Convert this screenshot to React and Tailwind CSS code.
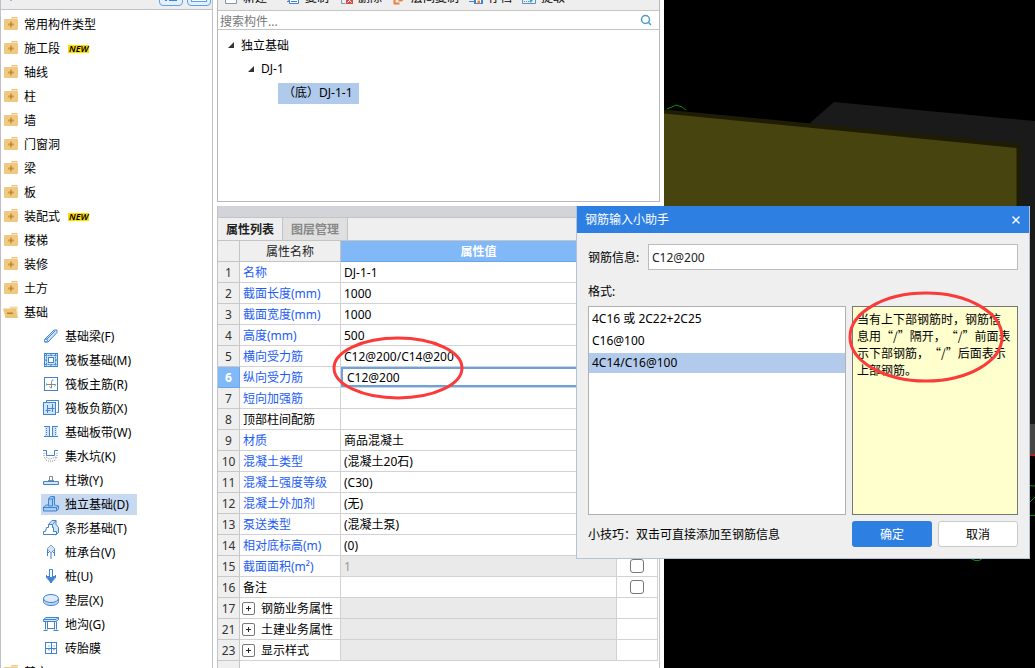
import React from "react";
import { Search, X } from "lucide-react";

const BLUE = "#3f83d3";
const PALE = "#d3e5fa";

function Folder({ open }) {
  if (open) {
    return (
      <svg width="16" height="14" viewBox="0 0 16 14" aria-hidden="true">
        <path d="M7 1.500h7.500V12h-2L7 4z" fill="#f6dca4" />
        <path d="M0 3.500h12.500L15 13H2.500z" fill="#eec578" />
        <path d="M4 7.500h6v1.500H4z" fill="#b98328" />
      </svg>
    );
  }
  return (
    <svg width="16" height="14" viewBox="0 0 16 14" aria-hidden="true">
      <path d="M8 1.500 8.700 0h5.500l.8 1.500z" fill="#eec578" />
      <rect x="1" y="2" width="14" height="11" rx="1" fill="#efc981" />
      <path d="M5 6.500h2v-2h2v2h2v2H9v2H7v-2H5z" fill="#d0a04a" />
      <path d="M7 6.500h2v2H7z" fill="#b98328" />
    </svg>
  );
}

const drawings = {
  beam: (
    <>
      <path d="M1.500 11.500 11 2h3v2.500L5 14H1.500z" fill={PALE} />
      <path d="M3 12 12 3" />
      <circle cx="3" cy="12.500" r="1.500" fill="#fff" />
    </>
  ),
  raft: (
    <>
      <rect x="1.500" y="1.500" width="13" height="13" fill={PALE} />
      <rect x="5.500" y="5.500" width="5" height="5" fill="#fff" />
      <path d="M3.500 1.500v13M12.500 1.500v13M1.500 3.500h13M1.500 12.500h13" strokeDasharray="2 1" />
      <path d="M8 2v2M8 12v2M2 8h2M12 8h2" />
    </>
  ),
  mainBar: (
    <>
      <rect x="1.500" y="1.500" width="13" height="13" fill="#fff" />
      <path d="M8.500 12V5.500Q8.500 4 10.500 4M8.500 12Q7 12 6.500 10.500M3.500 9.500V8.500H12.500Q12.500 10 11.500 10.500M3.500 8.500V7.500" stroke="#888" />
    </>
  ),
  negBar: (
    <>
      <path d="M3.500 2.500V.500h12v12h-2" />
      <rect x=".5" y="2.500" width="12" height="12" fill={PALE} />
      <path d="M4.500 5v8M9.500 4v8M4.500 8.500h7M2.500 10.500h5" />
    </>
  ),
  strip: (
    <>
      <path d="M2 2h4v11H2zM10 2h4v11h-4z" fill={PALE} stroke="none" />
      <path d="M1 2.500h5.500M9 2.500h6M1 12.500h14M6.500 2v10.500M9.500 2v10.500" />
      <path d="M3.500 4v8M12.500 4v8" strokeDasharray="1 1" />
    </>
  ),
  pit: (
    <>
      <path d="M0 2.500h3.500v5h8v-5H15" />
      <path d="M1 5v4l3 4h7l3-4V5M3 9l3 2 4-1 3-1" stroke="#8a9098" strokeDasharray="1 1" />
    </>
  ),
  pier: (
    <>
      <path d="M6.500 8.500v-4h3v4" stroke="#888" />
      <path d="M5 8.500h6" stroke="#888" />
      <path d="M.5 9.500h15v3H.5z" fill={PALE} />
    </>
  ),
  isolated: (
    <>
      <path d="M5.500 9V3l2-2.500h4V9l4 1v3l-2 2H.5v-4l3-2z" fill="#a9cdf5" />
      <path d="M5.500 3h4v7h-4zM9.500 3l2-2M.5 11.500h13M13.500 15v-3.500l2-1.500" />
    </>
  ),
  stripBase: (
    <>
      <path d="M5.500 4.500 9 .500h4v4l2.500 3v5l-3 2.500z" fill={PALE} />
      <path d="M.5 14.500v-3h2l1-4h2v-3h4v3h1v4h3v3z" fill="#fff" />
      <path d="M9.500 4.500 13 .5" />
    </>
  ),
  pileCap: (
    <>
      <path d="m8 1 4 4-4 4-4-4z" fill={PALE} stroke="#8a9fb8" />
      <path d="M8 9v6M4.500 6v6M11.500 6v6M7 7 5 9M9 7l2 2" />
    </>
  ),
  pile: (
    <>
      <path d="M3 8.500h10M3.500 7v3l4.500 4 4.500-4V7" />
      <path d="M4.500 9.500h7L8 15z" fill={BLUE} />
      <path d="M6.500 1.500h3v8h-3z" fill="#fff" />
    </>
  ),
  cushion: (
    <>
      <path d="M.5 6.500v3c0 2 3 4 7.500 4s7.500-2 7.500-4v-3" fill="#b9d4f4" />
      <ellipse cx="8" cy="6.500" rx="7.500" ry="4" fill="#dfeafa" />
    </>
  ),
  trench: (
    <>
      <path d="M.5 3.500 3 1.500h12.500v2L13 5.500H.5z" fill={PALE} />
      <path d="M.5 3.500H13l2-2M2.500 5.500v8M4.500 5.500v8M11.500 5.500v8M13.500 5.500v8M.5 14.500h4M10.500 14.500h5M5 12.500h6" />
    </>
  ),
  brick: (
    <>
      <rect x="2.500" y="2.500" width="11" height="11" fill="#fff" />
      <path d="M2.500 8.500h11M8.500 2.500v11M6 5.500v1M11 5.500v1M6 8.500v2M11 8.500v2" />
    </>
  ),
};

function Glyph({ name }) {
  return (
    <svg width="16" height="16" viewBox="0 0 16 16" fill="none" stroke={BLUE} strokeWidth="1" aria-hidden="true">
      {drawings[name]}
    </svg>
  );
}

const categories = [
  ["常用构件类型"],
  ["施工段", true],
  ["轴线"],
  ["柱"],
  ["墙"],
  ["门窗洞"],
  ["梁"],
  ["板"],
  ["装配式", true],
  ["楼梯"],
  ["装修"],
  ["土方"],
];

const foundations = [
  ["beam", "基础梁(F)"],
  ["raft", "筏板基础(M)"],
  ["mainBar", "筏板主筋(R)"],
  ["negBar", "筏板负筋(X)"],
  ["strip", "基础板带(W)"],
  ["pit", "集水坑(K)"],
  ["pier", "柱墩(Y)"],
  ["isolated", "独立基础(D)", true],
  ["stripBase", "条形基础(T)"],
  ["pileCap", "桩承台(V)"],
  ["pile", "桩(U)"],
  ["cushion", "垫层(X)"],
  ["trench", "地沟(G)"],
  ["brick", "砖胎膜"],
];

function Category({ label, isNew, open }) {
  return (
    <button type="button" className="flex h-6 w-full shrink-0 items-center pl-[2px] text-left">
      <Folder open={open} />
      <span className="ml-[5px] pt-0.5">{label}</span>
      {isNew && (
        <span className="ml-2 mt-0.5 bg-[#ffdc00] px-px text-[9px] leading-[8px] font-semibold italic">NEW</span>
      )}
    </button>
  );
}

function Sidebar() {
  return (
    <aside className="flex w-[213px] shrink-0 flex-col overflow-hidden border-x border-[#c0c0c8] bg-white">
      <div className="flex h-[10px] shrink-0 items-end gap-1 overflow-hidden border-b border-[#c0c0c8] bg-[#eeeeee] pr-px pb-[3px]">
        <svg className="mr-auto ml-2 mb-[5px]" width="4" height="4" viewBox="0 0 4 4" aria-hidden="true">
          <path d="M0 0h4v2L2 4 0 2z" fill={BLUE} />
        </svg>
        <button type="button" aria-label="列表视图" className="flex h-5 w-6 items-center justify-center rounded border border-[#5aa2ee] bg-[#e4f0fd]">
          <svg width="14" height="14" viewBox="0 0 14 14" fill="none" stroke={BLUE} aria-hidden="true">
            <path d="M1 2.500h2M5 2.500h8M1 6.500h2M5 6.500h8M1 11.500h2M5 11.500h8" />
          </svg>
        </button>
        <button type="button" aria-label="图标视图" className="flex h-5 w-6 items-center justify-center rounded border border-[#5aa2ee] bg-[#e4f0fd]">
          <svg width="16" height="14" viewBox="0 0 16 14" fill="#fff" stroke="#5aa2ee" aria-hidden="true">
            <rect x=".5" y=".5" width="15" height="12" />
          </svg>
        </button>
      </div>
      <nav className="flex flex-col pt-[2px]">
        {categories.map(([label, isNew]) => (
          <Category key={label} label={label} isNew={isNew} />
        ))}
        <Category label="基础" open />
        {foundations.map(([icon, label, active]) => (
          <div key={label} className="flex h-6 shrink-0 items-center pl-10">
            <button
              type="button"
              className={`flex h-[21px] items-center gap-[6px] pr-2 pl-[2px] ${active ? "bg-[#c7d9f0]" : ""}`}
            >
              <Glyph name={icon} />
              <span className="pt-0.5">{label}</span>
            </button>
          </div>
        ))}
        <Category label="其它" />
      </nav>
    </aside>
  );
}

const tools = [
  ["新建", "mr-[19px]", <path key="p" d="M1.500 1.500h11v11h-11z" stroke="#8a94a8" fill="#fff" />],
  [
    "复制",
    "mr-[10px]",
    <g key="p" stroke={BLUE}>
      <path d="M1 10.500h2v-8" />
      <path d="M3.500.500h9v12h-9zM5 8.500h6M5 10.500h6" fill="#fff" />
    </g>,
  ],
  [
    "删除",
    "mr-[10px]",
    <g key="p">
      <path d="M.5 8.500h2v4h4" stroke="#8a94a8" />
      <path d="M7 6h7v7H7z" fill="#d94a4a" />
      <path d="m8.500 7.500 4 4M12.500 7.500l-4 4" stroke="#fff" />
    </g>,
  ],
  [
    "层间复制",
    "mr-[10px]",
    <path key="p" d="M2.500 2.500v10h5M6.500 2.500h5v5l-2 2h-3" stroke="#e8823a" strokeWidth="2" />,
  ],
  [
    "存档",
    "mr-[10px]",
    <g key="p">
      <path d="M0 10.500h5" stroke={BLUE} />
      <path d="M5 3h9v10H5z" fill={BLUE} />
      <path d="M7 8h5v4H7z" fill="#fff" />
      <path d="M8.500 9.500h2.500v3H8.500z" fill="#e8823a" />
    </g>,
  ],
  [
    "提取",
    "",
    <g key="p">
      <path d="M.5 4v8.500h13V9" stroke="#5f8fc8" />
      <path d="M2 10.500h5" stroke="#5f8fc8" strokeDasharray="1 1" />
      <path d="m8 11 5-6" stroke="#28a5c0" strokeWidth="2" />
    </g>,
  ],
];

function Toolbar() {
  return (
    <div className="flex h-[10px] shrink-0 items-end overflow-hidden bg-[#eeeeee] pb-1 pl-[6px]">
      {tools.map(([label, gap, drawing]) => (
        <button key={label} type="button" className={`flex shrink-0 items-center gap-[5px] leading-4 ${gap}`}>
          <svg width="14" height="14" viewBox="0 0 14 14" fill="none" aria-hidden="true">
            {drawing}
          </svg>
          <span>{label}</span>
        </button>
      ))}
    </div>
  );
}

function Caret() {
  return (
    <svg width="6" height="6" viewBox="0 0 6 6" aria-hidden="true">
      <path d="M6 0v6H0z" fill="#333" />
    </svg>
  );
}

function ComponentTree() {
  return (
    <div className="flex h-[202px] shrink-0 flex-col border border-t-0 border-[#b8b8b8] bg-white">
      <Toolbar />
      <div className="flex h-5 shrink-0 items-center border-y border-[#c4c4c4] pr-[7px]">
        <input aria-label="搜索构件" placeholder="搜索构件..." className="h-[18px] min-w-0 flex-1 px-[2px] pt-0.5 outline-none placeholder:text-[#777]" />
        <Search size={12} strokeWidth={3} color="#4a9cc8" />
      </div>
      <ul className="pt-[3px]">
        <li className="flex h-6 items-center gap-[7px] pl-[10px]">
          <Caret />
          <span className="pt-0.5">独立基础</span>
        </li>
        <li className="flex h-6 items-center gap-[7px] pl-[30px]">
          <Caret />
          <span>DJ-1</span>
        </li>
        <li className="flex h-6 items-center pl-[60px]">
          <button type="button" className="h-[21px] bg-[#b0caeb] pr-[6px] pl-[5px]">（底）DJ-1-1</button>
        </li>
      </ul>
    </div>
  );
}

const rows = [
  { n: 1, name: "名称", value: "DJ-1-1" },
  { n: 2, name: "截面长度(mm)", value: "1000" },
  { n: 3, name: "截面宽度(mm)", value: "1000" },
  { n: 4, name: "高度(mm)", value: "500" },
  { n: 5, name: "横向受力筋", value: "C12@200/C14@200" },
  { n: 6, name: "纵向受力筋", value: "C12@200", editing: true },
  { n: 7, name: "短向加强筋", value: "" },
  { n: 8, name: "顶部柱间配筋", value: "", plain: true },
  { n: 9, name: "材质", value: "商品混凝土" },
  { n: 10, name: "混凝土类型", value: "(混凝土20石)" },
  { n: 11, name: "混凝土强度等级", value: "(C30)" },
  { n: 12, name: "混凝土外加剂", value: "(无)" },
  { n: 13, name: "泵送类型", value: "(混凝土泵)" },
  { n: 14, name: "相对底标高(m)", value: "(0)" },
  { n: 15, name: "截面面积(m²)", value: "1", locked: true, check: true },
  { n: 16, name: "备注", value: "", plain: true, check: true },
  { n: 17, name: "钢筋业务属性", group: true },
  { n: 21, name: "土建业务属性", group: true },
  { n: 23, name: "显示样式", group: true },
];

function PropertyRow({ row }) {
  const cell = "h-[21px] border-r border-b border-[#d2d2d2] p-0 leading-4 whitespace-nowrap";
  return (
    <tr>
      <th
        scope="row"
        className={`h-[21px] border-r border-b px-0 pt-0.5 pb-0 text-center leading-4 ${
          row.editing ? "border-[#6aa6ea] bg-[#80b8f8] font-bold text-white" : "border-[#c8c8c8] bg-[#efefef] font-normal text-[#333]"
        }`}
      >
        {row.n}
      </th>
      <td className={`${cell} ${row.plain || row.group ? "text-black" : "text-[#1c5cf5]"}`}>
        {row.group ? (
          <span className="flex items-center gap-[6px] pl-[2px]">
            <button type="button" aria-label={`展开${row.name}`} className="flex h-[13px] w-[13px] items-center justify-center rounded-[2px] border border-[#777]">
              <svg width="7" height="7" viewBox="0 0 7 7" stroke="#222" aria-hidden="true">
                <path d="M1 3.500h5M3.500 1v5" />
              </svg>
            </button>
            <span className="pt-0.5">{row.name}</span>
          </span>
        ) : (
          <span className="block pt-0.5 pl-[3px]">{row.name}</span>
        )}
      </td>
      <td className={`${cell} ${row.locked || row.group ? "bg-[#eaeaea] text-[#999]" : ""}`}>
        {row.editing ? (
          <input
            aria-label={row.name}
            defaultValue={row.value}
            className="block h-5 w-full border-2 border-r-0 border-[#6aa2e4] bg-white pl-1 outline-none"
          />
        ) : (
          <span className="block pt-0.5 pl-[3px]">{row.value}</span>
        )}
      </td>
      <td className={cell}>
        {row.check && (
          <input
            type="checkbox"
            aria-label={`${row.name}附加`}
            className="mx-auto block h-[14px] w-[14px] appearance-none rounded-[3px] border border-[#777] bg-white"
          />
        )}
      </td>
    </tr>
  );
}

function PropertyPanel() {
  return (
    <div className="mt-1 flex min-h-0 flex-1 flex-col overflow-hidden border-x border-[#c4c4c4] bg-white">
      <div className="h-3 shrink-0 border-b border-[#c4c4c8] bg-[#d3d3da]" />
      <div className="flex h-[23px] shrink-0 border-b border-[#c4c4c4] bg-[#efefef]">
        <button type="button" className="w-[65px] border-r border-[#c4c4c4] pt-0.5 font-bold text-[#222]">属性列表</button>
        <button type="button" className="w-[65px] border-r border-[#c4c4c4] bg-[#e0e0e0] pt-0.5 font-bold text-[#888]">图层管理</button>
      </div>
      <div className="flex-1 pr-px">
        <table className="w-full table-fixed border-separate border-spacing-0">
          <colgroup>
            <col className="w-[22px]" />
            <col className="w-[101px]" />
            <col />
            <col className="w-[41px]" />
          </colgroup>
          <thead>
            <tr className="leading-4">
              <td className="h-[21px] border-r border-b border-[#c4c4c4] bg-[#efefef] p-0" />
              <th scope="col" className="border-r border-b border-[#c4c4c4] bg-[#efefef] px-0 pt-0.5 pb-0 font-normal text-[#222]">属性名称</th>
              <th scope="col" className="border-r border-b border-[#6aa6ea] bg-[#80b8f8] px-0 pt-0.5 pb-0 font-bold text-white">属性值</th>
              <td className="border-r border-b border-[#c4c4c4] bg-[#efefef] p-0" />
            </tr>
          </thead>
          <tbody>
            {rows.map((row) => (
              <PropertyRow key={row.n} row={row} />
            ))}
          </tbody>
        </table>
        <div className="h-full w-[22px] border-r border-[#c4c4c4] bg-[#efefef]" />
      </div>
    </div>
  );
}

function Viewport() {
  return (
    <main className="min-w-0 flex-1 overflow-hidden bg-black">
      <svg width="371" height="668" viewBox="664 0 371 668" fill="none" aria-hidden="true">
        <path d="M810 123 834 102 1035 121V424H900z" fill="#1a1a1a" />
        <path d="M1020 424h15v31h-15z" fill="#454545" />
        <path d="M664 109.500 1021 143.500V300H664z" fill="#1e1c04" />
        <path d="M664 113.500 1016.500 148V300H664z" fill="#47440f" />
        <path d="m667 109 5-2 4-2 6 2 4 3" stroke="#079007" />
        <path d="m1020 454 15 1.500" stroke="#e01818" strokeWidth="1.500" />
        <path d="m1020 485 15 1M1028 504l7-7M1020 515.500h15M968 557l7 3.500h4l7-4" stroke="#079007" />
      </svg>
    </main>
  );
}

const formats = ["4C16 或 2C22+2C25", "C16@100", "4C14/C16@100"];

function RebarDialog() {
  return (
    <section
      role="dialog"
      aria-labelledby="rebar-title"
      className="absolute top-[206px] left-[576px] flex w-[454px] flex-col border border-t-0 border-[#b4c2d8] bg-[#efefef]"
    >
      <header className="flex h-[27px] items-center justify-between bg-[#2d80e2] pr-[7px] pl-2 text-white">
        <h2 id="rebar-title">钢筋输入小助手</h2>
        <button type="button" aria-label="关闭">
          <X size={12} strokeWidth={3} />
        </button>
      </header>
      <div className="flex flex-col px-[11px] pt-[11px] pb-[11px]">
        <div className="flex items-center">
          <label htmlFor="rebar-info" className="w-[60px] shrink-0 pt-0.5">钢筋信息:</label>
          <input
            id="rebar-info"
            defaultValue="C12@200"
            className="h-[26px] min-w-0 flex-1 border border-[#bcbcbc] bg-white px-[3px] text-[#222] outline-none"
          />
        </div>
        <p className="mt-[14px] mb-[6px] leading-4">格式:</p>
        <div className="flex h-[209px] gap-[6px]">
          <ul className="w-[258px] shrink-0 border border-[#b0b0b0] bg-white pt-px">
            {formats.map((text, i) => (
              <li key={text}>
                <button type="button" className="block h-[22px] w-full text-left">
                  <span className={`block h-5 px-[3px] leading-5 ${i === 2 ? "bg-[#b2cbec]" : ""}`}>{text}</span>
                </button>
              </li>
            ))}
          </ul>
          <p className="min-w-0 flex-1 border border-[#777] bg-[#ffffce] py-[3px] pl-1 font-['Noto_Sans_CJK_SC',sans-serif] leading-[17px] whitespace-nowrap [text-spacing-trim:space-all]">
            当有上下部钢筋时，钢筋信
            <br />
            息用“/”隔开，“/”前面表
            <br />
            示下部钢筋，“/”后面表示
            <br />
            上部钢筋。
          </p>
        </div>
        <div className="mt-[6px] flex h-[26px] items-center gap-[6px]">
          <p className="flex-1 pt-0.5">小技巧：双击可直接添加至钢筋信息</p>
          <button type="button" className="h-[26px] w-20 rounded-[3px] bg-[#2d80e2] pt-0.5 text-white">确定</button>
          <button type="button" className="h-[26px] w-20 rounded-[3px] border border-[#c8c8c8] bg-white pt-0.5">取消</button>
        </div>
      </div>
    </section>
  );
}

export default function App() {
  return (
    <div className="relative flex h-screen overflow-hidden bg-white font-['Noto_Sans','Noto_Sans_CJK_SC',sans-serif] text-xs text-black">
      <Sidebar />
      <div className="mr-1 ml-1 flex w-[443px] shrink-0 flex-col">
        <ComponentTree />
        <PropertyPanel />
      </div>
      <Viewport />
      <RebarDialog />
      <svg className="pointer-events-none absolute top-[335px] left-[332px]" width="132" height="66" viewBox="0 0 132 66" fill="none" stroke="#fb3a3a" strokeWidth="3" aria-hidden="true">
        <ellipse cx="66" cy="33" rx="64" ry="30" />
      </svg>
      <svg className="pointer-events-none absolute top-[290px] left-[847px]" width="158" height="94" viewBox="0 0 158 94" fill="none" stroke="#fb3a3a" strokeWidth="3" aria-hidden="true">
        <ellipse cx="79" cy="47" rx="76" ry="44" />
      </svg>
    </div>
  );
}
